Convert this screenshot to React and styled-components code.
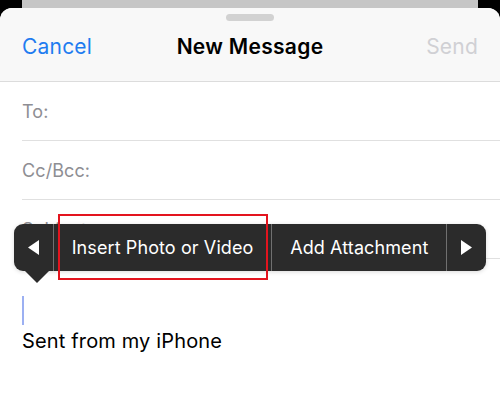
import React from 'react'
import styled, { createGlobalStyle } from 'styled-components'

const GlobalStyle = createGlobalStyle`
  html, body {
    margin: 0;
    padding: 0;
    background: #000000;
  }
  body {
    font-family: Inter, "Liberation Sans", sans-serif;
    -webkit-font-smoothing: antialiased;
  }
`

const Screen = styled.div`
  width: 500px;
  height: 412px;
  background: #000000;
  display: flex;
  flex-direction: column;
  overflow: hidden;
`

const BackCard = styled.div`
  height: 8px;
  margin: 0 22px;
  background: #c6c6c6;
  flex-shrink: 0;
`

const Sheet = styled.div`
  position: relative;
  flex: 1;
  background: #ffffff;
  border-radius: 12px 12px 0 0;
  overflow: hidden;
  display: flex;
  flex-direction: column;
`

const Header = styled.div`
  background: #f8f8f8;
  border-bottom: 1px solid #dcdcdc;
  height: 74px;
  display: flex;
  flex-direction: column;
  align-items: center;
  padding-top: 6px;
  box-sizing: border-box;
`

const Grabber = styled.div`
  width: 48px;
  height: 7px;
  border-radius: 4px;
  background: #d2d2d2;
`

const NavRow = styled.div`
  align-self: stretch;
  display: flex;
  align-items: center;
  justify-content: space-between;
  padding: 0 22px;
  height: 38px;
  margin-top: 6px;
`

const NavButton = styled.span`
  font-size: 21px;
  letter-spacing: 0.2px;
  color: ${p => (p.$disabled ? '#d0d0d4' : '#1f7cf0')};
  width: 80px;
  text-align: ${p => (p.$right ? 'right' : 'left')};
`

const Title = styled.span`
  font-size: 21px;
  font-weight: 600;
  letter-spacing: 0.3px;
  color: #000000;
`

const Field = styled.div`
  height: 58px;
  margin-left: 22px;
  border-bottom: 1px solid #e0e0e0;
  display: flex;
  align-items: center;
  font-size: 18px;
  letter-spacing: 0.1px;
  color: #8e8e93;
`

const Body = styled.div`
  padding: 37px 22px 0;
  display: flex;
  flex-direction: column;
`

const Caret = styled.div`
  width: 2px;
  height: 29px;
  background: #9cb0f2;
`

const Signature = styled.div`
  font-size: 20px;
  letter-spacing: 0.15px;
  color: #000000;
  margin-top: 4px;
`

const Menu = styled.div`
  position: absolute;
  top: 216px;
  left: 14px;
  width: 472px;
  height: 47px;
  background: #2b2b2b;
  border-radius: 9px;
  display: flex;
  align-items: stretch;
  box-shadow: 0 1px 4px rgba(0, 0, 0, 0.15);

  &::after {
    content: '';
    position: absolute;
    left: 11px;
    top: 47px;
    border-left: 12px solid transparent;
    border-right: 12px solid transparent;
    border-top: 12px solid #2b2b2b;
  }
`

const MenuItem = styled.div`
  width: ${p => p.$w}px;
  display: flex;
  align-items: center;
  justify-content: center;
  color: #ffffff;
  font-size: 18px;
  letter-spacing: 0.1px;
  white-space: nowrap;
  & + & {
    border-left: 1px solid #707070;
  }
`

const Highlight = styled.div`
  position: absolute;
  left: 58px;
  top: 206px;
  width: 210px;
  height: 66px;
  border: 2px solid #e3141e;
  box-sizing: border-box;
  pointer-events: none;
`

const Arrow = ({ dir }) => (
  <svg width="13" height="15" viewBox="0 0 13 15">
    {dir === 'left'
      ? <polygon points="12,0 12,15 1,7.5" fill="#ffffff" />
      : <polygon points="1,0 1,15 12,7.5" fill="#ffffff" />}
  </svg>
)

export default function App () {
  return (
    <Screen>
      <GlobalStyle />
      <BackCard />
      <Sheet>
        <Header>
          <Grabber />
          <NavRow>
            <NavButton>Cancel</NavButton>
            <Title>New Message</Title>
            <NavButton $disabled $right>Send</NavButton>
          </NavRow>
        </Header>
        <Field>To:</Field>
        <Field>Cc/Bcc:</Field>
        <Field>Subject:</Field>
        <Body>
          <Caret />
          <Signature>Sent from my iPhone</Signature>
        </Body>
        <Menu>
          <MenuItem $w={39}><Arrow dir="left" /></MenuItem>
          <MenuItem $w={219}>Insert Photo or Video</MenuItem>
          <MenuItem $w={175}>Add Attachment</MenuItem>
          <MenuItem $w={39}><Arrow dir="right" /></MenuItem>
        </Menu>
        <Highlight />
      </Sheet>
    </Screen>
  )
}
